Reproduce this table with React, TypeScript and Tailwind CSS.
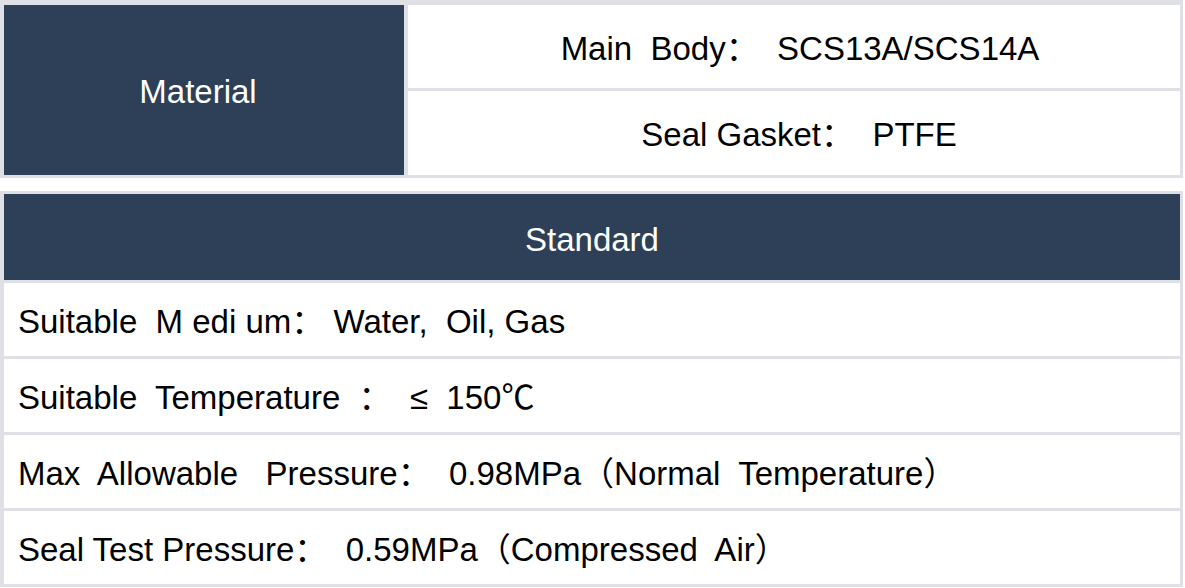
import React from "react";

const rows = [
  "Suitable  M edi um： Water,  Oil, Gas",
  "Suitable  Temperature  ：  ≤  150℃",
  "Max  Allowable   Pressure：  0.98MPa（Normal  Temperature）",
  "Seal Test Pressure：  0.59MPa（Compressed  Air）",
];

function App() {
  return (
    <div
      className="bg-white min-h-screen w-[1185px] text-[33px] text-black whitespace-pre"
      style={{ fontFamily: '"Liberation Sans", "Noto Sans CJK SC", sans-serif' }}
    >
      <div className="w-[1183px]">
        {/* material block */}
        <div className="bg-[#dfe0e6] pt-[5px] pl-[4px] pr-[3px] pb-[3px] grid grid-cols-[400px_1fr] grid-rows-[83px_84px] gap-x-[4px] gap-y-[3px]">
          <div className="row-span-2 bg-[#2d4058] text-white flex items-center justify-center pt-[4px] pr-[12px]">
            Material
          </div>
          <div className="bg-white flex items-center justify-center pt-[4px] pl-[12px]">
            Main  Body：  SCS13A/SCS14A
          </div>
          <div className="bg-white flex items-center justify-center pt-[4px] pl-[10px]">
            Seal Gasket：  PTFE
          </div>
        </div>

        {/* standard block */}
        <div className="mt-[13px] bg-[#dfe0e6] pt-[3px] pl-[4px] pr-[3px] pb-[3px] flex flex-col gap-[3px]">
          <div className="h-[86px] bg-[#2d4058] text-white flex items-center justify-center pt-[5px]">
            Standard
          </div>
          {rows.map((r) => (
            <div key={r} className="h-[73px] bg-white flex items-center pl-[14px] pt-[4px]">
              {r}
            </div>
          ))}
        </div>
      </div>
    </div>
  );
}

export default App;
